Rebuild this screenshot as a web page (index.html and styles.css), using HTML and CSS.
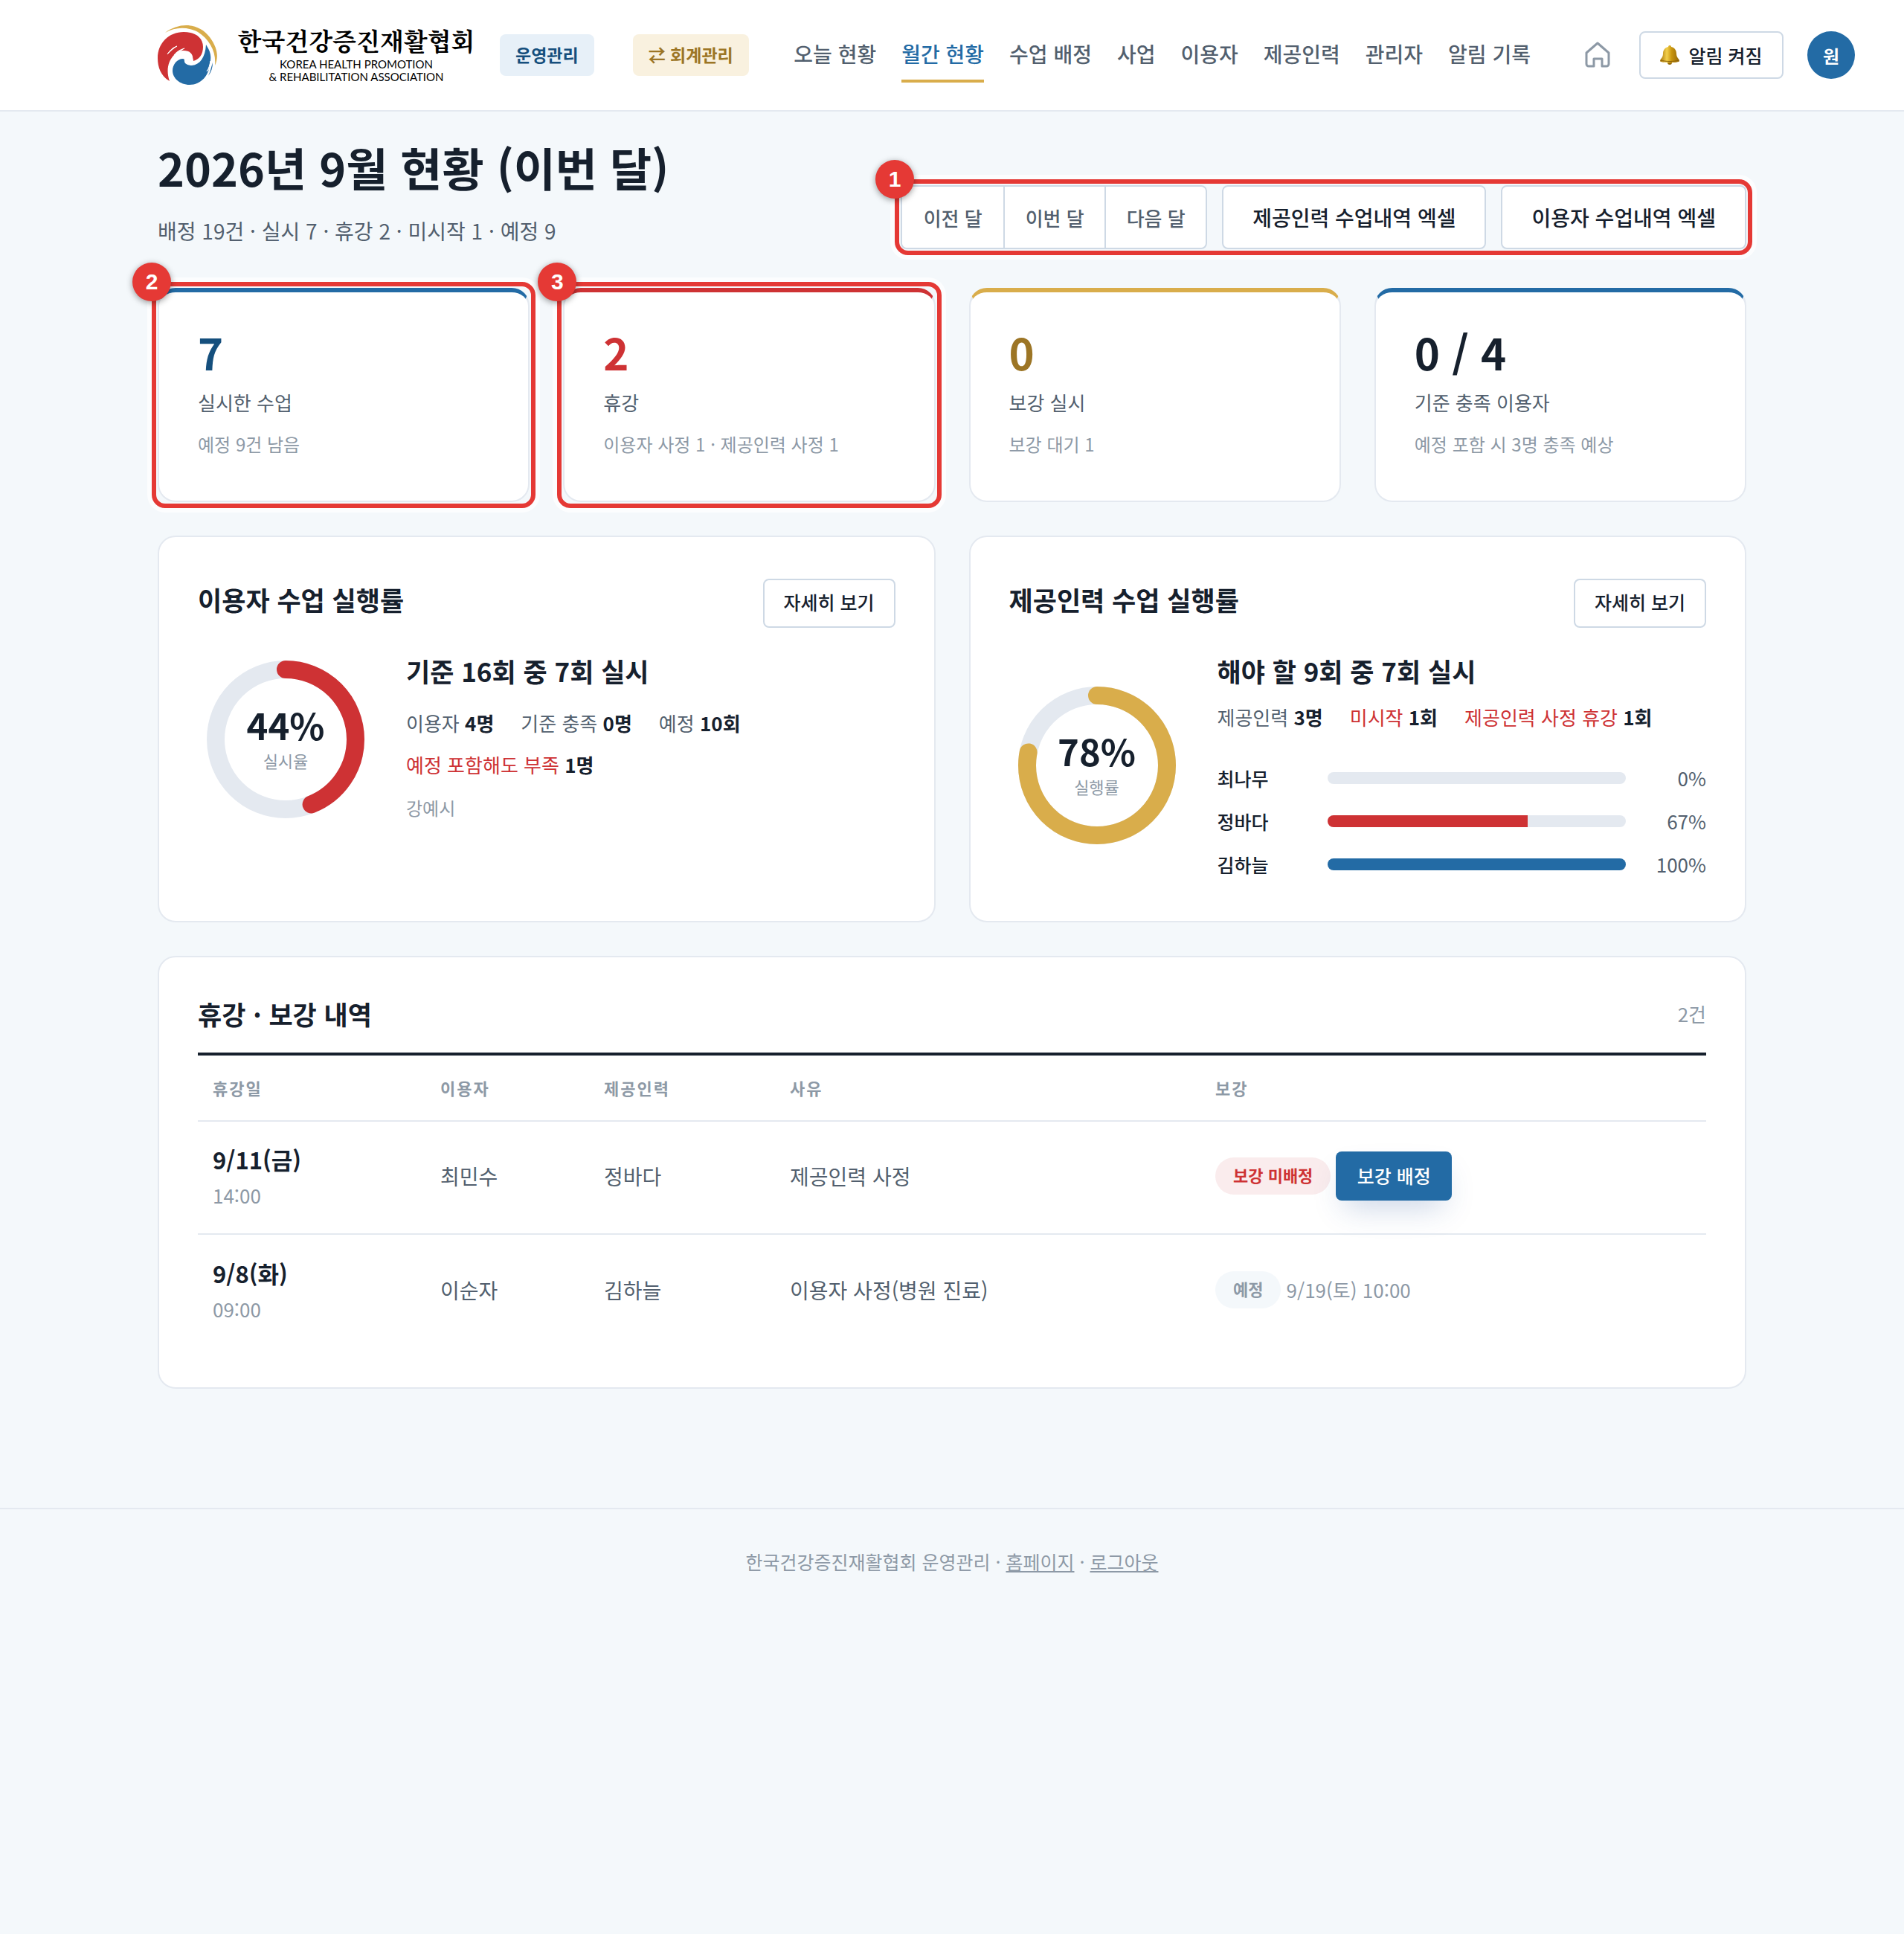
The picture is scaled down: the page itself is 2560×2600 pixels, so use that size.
FILE: index.html
```html
<!DOCTYPE html>
<html lang="ko">

<head>
  <meta charset="UTF-8">
  <meta name="viewport" content="width=device-width, initial-scale=1.0">
  <title>월간 현황</title>
  <link rel="stylesheet" href="styles.css">
</head>

<body>
  <header class="header">
    <a class="brand" href="#">
      <svg class="brand_mark" viewBox="0 0 80 80" aria-hidden="true">
        <path d="M10 10C30-5 56-3 70 16c11 15 12 27 7 38C79 36 70 19 54 9 40 2 24 2 10 10z" fill="#d9ad4b" />
        <path d="M16 75C4 68 0 56 0 44 0 24 15 9 35 9c16 0 26 8 26 20 0 10-5 17-13 19 0-2-1-4-1-6-1-5-5-8-12-8-6 0-10 2-13 6-8 8-11 21-6 35z" fill="#ce3234" />
        <path d="M20 61c0-8 6-16 14-16 3 0 1 3 3 6 2 2 6 3 9 3 11-1 18-11 19-28 5 8 7 13 6 21-1 21-13 33-28 33-13 0-23-9-23-19z" fill="#236ba5" />
        <path d="M74 50c0 7-2 13-6 18 3-6 4-12 6-18z" fill="#236ba5" />
        <path d="M13 39c3-5 7-9 13-11-5 3-8 6-13 11zM22 40c4-5 8-7 14-9-4 2-7 5-14 9zM66 62c3-4 4-9 5-14 1 6-1 10-5 14z" fill="#fff" stroke="#fff" />
      </svg>
      <span class="brand_text">
        <span class="brand_name">한국건강증진재활협회</span>
        <span class="brand_en">KOREA HEALTH PROMOTION<br>&amp; REHABILITATION ASSOCIATION</span>
      </span>
    </a>
    <a class="tag tag_blue" href="#">운영관리</a>
    <a class="tag tag_gold" href="#">⇄ 회계관리</a>
    <nav class="nav">
      <a href="#">오늘 현황</a>
      <a class="active" href="#">월간 현황</a>
      <a href="#">수업 배정</a>
      <a href="#">사업</a>
      <a href="#">이용자</a>
      <a href="#">제공인력</a>
      <a href="#">관리자</a>
      <a href="#">알림 기록</a>
    </nav>
    <a class="home" href="#" aria-label="홈">
      <svg viewBox="0 0 36 36" aria-hidden="true">
        <path d="M3 15 18 2l15 13v15a3 3 0 0 1-3 3h-6V23H13v10H6a3 3 0 0 1-3-3z" />
      </svg>
    </a>
    <button type="button" class="bell_btn">
      <svg class="bell" viewBox="0 0 26 26" aria-hidden="true">
        <defs>
          <linearGradient id="gold">
            <stop offset="0" stop-color="#a87408" />
            <stop offset="0.35" stop-color="#f3d04c" />
            <stop offset="0.6" stop-color="#c8950f" />
            <stop offset="1" stop-color="#96690a" />
          </linearGradient>
        </defs>
        <circle cx="13" cy="23" r="3" fill="#96690a" />
        <path d="M13 0c2 0 2 2 2 2 5 1 7 5 7 9 0 6 4 7 4 10 0 3-26 3-26 0 0-3 4-4 4-10 0-4 2-8 7-9 0 0 0-2 2-2z" fill="url(#gold)" />
        <path d="M1 20c6 2 18 2 24 0" fill="none" stroke="#8a6008" />
      </svg>
      알림 켜짐
    </button>
    <button type="button" class="avatar">원</button>
  </header>

  <main class="container">
    <div class="page_top">
      <div>
        <h1>2026년 9월 현황 (이번 달)</h1>
        <p class="summary">배정 19건 · 실시 7 · 휴강 2 · 미시작 1 · 예정 9</p>
      </div>
      <div class="tools marked">
        <span class="mark_no">1</span>
        <div class="months">
          <button type="button">이전 달</button>
          <button type="button">이번 달</button>
          <button type="button">다음 달</button>
        </div>
        <button type="button" class="excel_btn">제공인력 수업내역 엑셀</button>
        <button type="button" class="excel_btn">이용자 수업내역 엑셀</button>
      </div>
    </div>

    <section class="stats">
      <div class="marked">
        <span class="mark_no">2</span>
        <div class="stat stat_blue">
          <strong>7</strong>
          <p>실시한 수업</p>
          <small>예정 9건 남음</small>
        </div>
      </div>
      <div class="marked">
        <span class="mark_no">3</span>
        <div class="stat stat_red">
          <strong>2</strong>
          <p>휴강</p>
          <small>이용자 사정 1 · 제공인력 사정 1</small>
        </div>
      </div>
      <div class="stat stat_gold">
        <strong>0</strong>
        <p>보강 실시</p>
        <small>보강 대기 1</small>
      </div>
      <div class="stat">
        <strong>0 / 4</strong>
        <p>기준 충족 이용자</p>
        <small>예정 포함 시 3명 충족 예상</small>
      </div>
    </section>

    <section class="rates">
      <div class="card user_card">
        <div class="card_top">
          <h2>이용자 수업 실행률</h2>
          <button type="button" class="more_btn">자세히 보기</button>
        </div>
        <div class="rate">
          <div class="donut">
            <svg viewBox="0 0 236 236" aria-hidden="true">
              <circle class="donut_bg" cx="118" cy="118" r="94" />
              <circle class="donut_bar red_bar" cx="118" cy="118" r="94" pathLength="100" stroke-dasharray="44 100" />
            </svg>
            <div class="donut_text">
              <strong>44%</strong>
              <span>실시율</span>
            </div>
          </div>
          <div class="rate_info">
            <h3>기준 16회 중 7회 실시</h3>
            <ul class="facts">
              <li>이용자 <b>4명</b></li>
              <li>기준 충족 <b>0명</b></li>
              <li>예정 <b>10회</b></li>
              <li class="warn">예정 포함해도 부족 <b>1명</b></li>
            </ul>
            <p class="names">강예시</p>
          </div>
        </div>
      </div>

      <div class="card">
        <div class="card_top">
          <h2>제공인력 수업 실행률</h2>
          <button type="button" class="more_btn">자세히 보기</button>
        </div>
        <div class="rate">
          <div class="donut">
            <svg viewBox="0 0 236 236" aria-hidden="true">
              <circle class="donut_bg" cx="118" cy="118" r="94" />
              <circle class="donut_bar gold_bar" cx="118" cy="118" r="94" pathLength="100" stroke-dasharray="78 100" />
            </svg>
            <div class="donut_text">
              <strong>78%</strong>
              <span>실행률</span>
            </div>
          </div>
          <div class="rate_info">
            <h3>해야 할 9회 중 7회 실시</h3>
            <ul class="facts">
              <li>제공인력 <b>3명</b></li>
              <li class="warn">미시작 <b>1회</b></li>
              <li class="warn">제공인력 사정 휴강 <b>1회</b></li>
            </ul>
            <ul class="bars">
              <li>
                <span class="bar_name">최나무</span>
                <div class="bar"><div class="fill" style="width: 0%"></div></div>
                <span class="bar_value">0%</span>
              </li>
              <li>
                <span class="bar_name">정바다</span>
                <div class="bar"><div class="fill fill_red" style="width: 67%"></div></div>
                <span class="bar_value">67%</span>
              </li>
              <li>
                <span class="bar_name">김하늘</span>
                <div class="bar"><div class="fill" style="width: 100%"></div></div>
                <span class="bar_value">100%</span>
              </li>
            </ul>
          </div>
        </div>
      </div>
    </section>

    <section class="card history">
      <div class="history_top">
        <h2>휴강 · 보강 내역</h2>
        <span class="count">2건</span>
      </div>
      <table>
        <colgroup>
          <col class="col_date">
          <col class="col_user">
          <col class="col_staff">
          <col class="col_reason">
          <col>
        </colgroup>
        <thead>
          <tr>
            <th>휴강일</th>
            <th>이용자</th>
            <th>제공인력</th>
            <th>사유</th>
            <th>보강</th>
          </tr>
        </thead>
        <tbody>
          <tr>
            <td><strong class="date">9/11(금)</strong><span class="hour">14:00</span></td>
            <td>최민수</td>
            <td>정바다</td>
            <td>제공인력 사정</td>
            <td>
              <div class="makeup">
                <span class="pill pill_red">보강 미배정</span>
                <button type="button" class="assign_btn">보강 배정</button>
              </div>
            </td>
          </tr>
          <tr>
            <td><strong class="date">9/8(화)</strong><span class="hour">09:00</span></td>
            <td>이순자</td>
            <td>김하늘</td>
            <td>이용자 사정(병원 진료)</td>
            <td>
              <div class="makeup">
                <span class="pill">예정</span>
                <span class="when">9/19(토) 10:00</span>
              </div>
            </td>
          </tr>
        </tbody>
      </table>
    </section>
  </main>

  <footer class="footer">
    한국건강증진재활협회 운영관리 · <a href="#">홈페이지</a> · <a href="#">로그아웃</a>
  </footer>
</body>

</html>
```
FILE: styles.css
```css
* {
  box-sizing: border-box;
}

body {
  margin: 0;

  font-family: "Noto Sans CJK KR", "Noto Sans", sans-serif;
  font-size: 26px;
  line-height: 40px;
  color: #525f6e;
  background-color: #f4f8fb;
}

h1,
h2,
h3,
p,
ul {
  margin: 0;
  padding: 0;
}

ul {
  list-style: none;
}

button {
  padding: 0;

  font-family: inherit;
  color: #16202d;
  background-color: white;
  border: 2px solid #ced9e5;
  border-radius: 8px;
}

a {
  color: inherit;
  text-decoration: none;
}

.header {
  height: 150px;
  padding: 0 66px 0 212px;

  display: flex;
  align-items: center;

  background-color: white;
  border-bottom: 2px solid #e4e9f0;
}

.brand {
  display: flex;
  align-items: center;
  gap: 26px;

  margin-right: 32px;
  color: black;
}

.brand_mark {
  width: 80px;
  height: 80px;
}

.brand_text {
  width: 322px;

  display: flex;
  flex-direction: column;
  text-align: center;
}

.brand_name {
  font-family: "Noto Serif CJK KR", "Noto Sans CJK KR", serif;
  font-size: 33px;
  font-weight: 700;
  line-height: 36px;
  white-space: nowrap;
}

.brand_en {
  margin-top: 6px;

  font-family: Lato, sans-serif;
  font-size: 15px;
  line-height: 17px;
}

.tag {
  height: 56px;
  padding: 0 21px;

  font-size: 23px;
  font-weight: 700;
  line-height: 54px;
  border-radius: 8px;
}

.tag_blue {
  color: #154f7d;
  background-color: #e7f0f8;
}

.tag_gold {
  margin-left: 52px;

  color: #9c7525;
  background-color: #f9f1df;
}

.nav {
  display: flex;
  gap: 34px;

  margin-left: auto;
  font-size: 28px;
  font-weight: 500;
}

.nav a {
  height: 74px;

  line-height: 70px;
  border-bottom: 4px solid transparent;
}

.nav .active {
  color: #236ba5;
  border-color: #d9ad4b;
}

.home {
  width: 36px;
  height: 36px;

  margin: 0 38px 0 72px;
}

.home svg {
  display: block;

  fill: none;
  stroke: #8d99a6;
  stroke-width: 3;
  stroke-linejoin: round;
}

.bell_btn {
  width: 194px;
  height: 64px;

  display: flex;
  justify-content: center;
  align-items: center;
  gap: 12px;

  font-size: 25px;
  font-weight: 500;
}

.bell {
  width: 26px;
  height: 26px;
}

.avatar {
  width: 64px;
  height: 64px;

  margin-left: 32px;

  font-size: 24px;
  font-weight: 700;
  color: white;
  background-color: #236ba5;
  border: 0;
  border-radius: 50%;
}

.container {
  max-width: 2136px;

  margin: 0 auto;
  padding-top: 36px;
}

.page_top {
  display: flex;
  justify-content: space-between;
  align-items: flex-end;

  margin-bottom: 52px;
}

h1 {
  font-size: 61px;
  font-weight: 700;
  line-height: 78px;
  color: #16202d;
}

.summary {
  margin-top: 21px;

  font-size: 28px;
  line-height: 50px;
}

/* numbered guide frames */
.marked {
  position: relative;
}

.marked::after {
  content: "";
  position: absolute;
  inset: -8px;

  border: 6px solid #e53935;
  border-radius: 18px;
  box-shadow: 0 0 0 6px rgba(255, 255, 255, 0.7);
  pointer-events: none;
}

.mark_no {
  position: absolute;
  top: -34px;
  left: -34px;
  z-index: 1;

  width: 52px;
  height: 52px;

  font-family: "Liberation Sans", sans-serif;
  font-size: 30px;
  font-weight: 700;
  line-height: 52px;
  text-align: center;
  color: white;
  background-color: #e53935;
  border-radius: 50%;
  box-shadow: 0 2px 8px rgba(0, 0, 0, 0.4);
}

.tools {
  display: flex;
  gap: 20px;
}

.months {
  display: flex;

  background-color: white;
  border: 2px solid #ced9e5;
  border-radius: 8px;
}

.months button {
  width: 136px;
  height: 82px;

  font-size: 26px;
  font-weight: 500;
  color: #525f6e;
  border: 0;
}

.months button + button {
  border-left: 2px solid #ced9e5;
  border-radius: 0;
}

.months button:last-child {
  border-radius: 0 8px 8px 0;
}

.excel_btn {
  height: 86px;
  padding: 0 39px;

  font-size: 28px;
  font-weight: 500;
}

.stats {
  display: grid;
  grid-template-columns: repeat(4, 1fr);
  gap: 45px;

  margin-bottom: 45px;
}

.stat {
  height: 288px;
  padding: 44px 52px;

  background-color: white;
  border: 2px solid #e4e9f0;
  border-top: 6px solid #236ba5;
  border-radius: 24px;
}

.stat strong {
  display: block;

  font-size: 58px;
  line-height: 72px;
  color: #16202d;
}

.stat p {
  margin-top: 12px;
}

.stat small {
  display: block;

  margin-top: 16px;
  font-size: 24px;
  color: #8d99a6;
}

.stat_blue strong {
  color: #154f7d;
}

.stat_red {
  border-top-color: #ce3234;
}

.stat_red strong {
  color: #ce3234;
}

.stat_gold {
  border-top-color: #d9ad4b;
}

.stat_gold strong {
  color: #9c7525;
}

.card {
  padding: 56px 52px;

  background-color: white;
  border: 2px solid #e4e9f0;
  border-radius: 24px;
}

.rates {
  display: grid;
  grid-template-columns: 1fr 1fr;
  gap: 45px;

  margin-bottom: 45px;
}

.card_top {
  display: flex;
  justify-content: space-between;
  align-items: flex-start;

  margin-bottom: 32px;
}

h2 {
  font-size: 35px;
  font-weight: 700;
  line-height: 56px;
  color: #16202d;
}

.more_btn {
  width: 178px;
  height: 66px;

  padding-bottom: 4px;
  font-size: 25px;
  font-weight: 500;
}

.rate {
  display: flex;
  align-items: center;
  gap: 44px;
}

.user_card .rate {
  align-items: flex-start;
}

.user_card .facts {
  margin-top: 24px;
}

.donut {
  width: 236px;
  height: 236px;

  position: relative;
  flex-shrink: 0;
}

.donut svg {
  display: block;
  transform: rotate(-90deg);
}

.donut circle {
  fill: none;
  stroke-width: 24;
}

.donut .donut_bg {
  stroke: #e4e9f0;
}

.donut_bar {
  stroke-linecap: round;
}

.red_bar {
  stroke: #ce3234;
}

.gold_bar {
  stroke: #d9ad4b;
}

.donut_text {
  position: absolute;
  inset: 0;

  display: flex;
  flex-direction: column;
  justify-content: center;
  align-items: center;
}

.donut_text strong {
  font-size: 49px;
  line-height: 56px;
  color: #16202d;
}

.donut_text span {
  font-size: 22px;
  color: #8d99a6;
}

.rate_info {
  flex: 1;
}

h3 {
  font-size: 35px;
  font-weight: 700;
  line-height: 52px;
  color: #16202d;
}

.facts {
  display: flex;
  flex-wrap: wrap;
  gap: 16px 36px;

  margin-top: 16px;
}

.facts b {
  color: #16202d;
}

.warn {
  color: #ce3234;
}

.names {
  margin-top: 18px;

  font-size: 24px;
  color: #8d99a6;
}

.bars {
  display: flex;
  flex-direction: column;
  gap: 18px;

  margin-top: 42px;
}

.bars li {
  display: flex;
  align-items: center;
}

.bar_name {
  width: 148px;

  font-size: 25px;
  font-weight: 500;
  color: #16202d;
}

.bar {
  height: 16px;

  flex: 1;
  overflow: hidden;
  background-color: #e4e9f0;
  border-radius: 8px;
}

.fill {
  height: 16px;

  background-color: #236ba5;
}

.fill_red {
  background-color: #ce3234;
}

.bar_value {
  width: 108px;

  text-align: right;
}

.history {
  padding: 48px 52px 54px;
}

.history_top {
  display: flex;
  justify-content: space-between;
  align-items: center;

  padding-bottom: 24px;
  border-bottom: 4px solid #16202d;
}

.count {
  color: #8d99a6;
}

table {
  width: 100%;

  table-layout: fixed;
  border-collapse: collapse;
}

.col_date {
  width: 306px;
}

.col_user {
  width: 220px;
}

.col_staff {
  width: 250px;
}

.col_reason {
  width: 572px;
}

th {
  height: 88px;
  padding: 0 20px 2px;

  font-size: 22px;
  font-weight: 700;
  letter-spacing: 2px;
  text-align: left;
  color: #8d99a6;
  border-bottom: 2px solid #e4e9f0;
}

td {
  height: 152px;
  padding: 0 20px 4px;

  font-size: 28px;
}

tbody tr + tr td {
  border-top: 2px solid #e4e9f0;
}

.date {
  display: block;

  font-size: 31px;
  line-height: 52px;
  color: #16202d;
}

.hour {
  font-size: 26px;
  line-height: 44px;
  color: #8d99a6;
}

.makeup {
  display: flex;
  align-items: center;
  gap: 7px;
}

.pill {
  height: 50px;
  padding: 0 24px;

  font-size: 22px;
  font-weight: 700;
  line-height: 46px;
  color: #8d99a6;
  background-color: #f4f8fb;
  border-radius: 25px;
}

.pill_red {
  color: #ce3234;
  background-color: #faeced;
}

.assign_btn {
  width: 156px;
  height: 66px;

  padding-bottom: 2px;
  font-size: 25px;
  font-weight: 500;
  color: white;
  background-color: #236ba5;
  border: 0;
  box-shadow: 0 20px 40px -12px rgba(35, 80, 150, 0.25);
}

.when {
  font-size: 26px;
  color: #8d99a6;
}

.footer {
  margin-top: 160px;
  padding: 50px 0;

  font-size: 25px;
  text-align: center;
  color: #8d99a6;
  border-top: 2px solid #e4e9f0;
}

.footer a {
  text-decoration: underline;
}
```
